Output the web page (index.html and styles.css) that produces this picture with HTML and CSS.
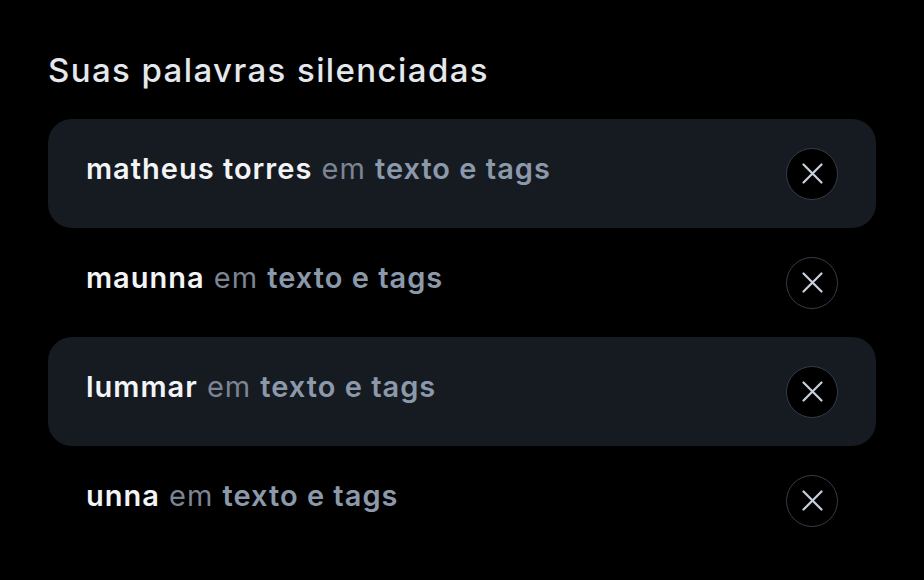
FILE: index.html
```html
<!DOCTYPE html>
<html lang="pt">
<head>
<meta charset="utf-8">
<link rel="stylesheet" href="styles.css">
</head>
<body>
<main class="page">
  <h1 class="title">Suas palavras silenciadas</h1>
  <ul class="list">
    <li class="row alt">
      <span class="label"><b class="word">matheus torres</b> <span class="em">em</span> <span class="where">texto e tags</span></span>
      <button class="remove" aria-label="Remover"><svg viewBox="0 0 24 24" width="27" height="27"><path d="M4 4L20 20M20 4L4 20" /></svg></button>
    </li>
    <li class="row">
      <span class="label"><b class="word">maunna</b> <span class="em">em</span> <span class="where">texto e tags</span></span>
      <button class="remove" aria-label="Remover"><svg viewBox="0 0 24 24" width="27" height="27"><path d="M4 4L20 20M20 4L4 20" /></svg></button>
    </li>
    <li class="row alt">
      <span class="label"><b class="word">lummar</b> <span class="em">em</span> <span class="where">texto e tags</span></span>
      <button class="remove" aria-label="Remover"><svg viewBox="0 0 24 24" width="27" height="27"><path d="M4 4L20 20M20 4L4 20" /></svg></button>
    </li>
    <li class="row">
      <span class="label"><b class="word">unna</b> <span class="em">em</span> <span class="where">texto e tags</span></span>
      <button class="remove" aria-label="Remover"><svg viewBox="0 0 24 24" width="27" height="27"><path d="M4 4L20 20M20 4L4 20" /></svg></button>
    </li>
  </ul>
</main>
</body>
</html>
```

FILE: styles.css
```css
html, body {
  margin: 0;
  padding: 0;
  background: #000;
}
body {
  font-family: Inter, "Noto Sans", sans-serif;
  width: 924px;
  height: 580px;
  overflow: hidden;
}
.page {
  padding: 48px 48px 0 48px;
}
.title {
  margin: 0;
  font-size: 33px;
  font-weight: 500;
  color: #e4e7eb;
  line-height: 44px;
  letter-spacing: 1.4px;
}
.list {
  list-style: none;
  margin: 27px 0 0 0;
  padding: 0;
}
.row {
  height: 109px;
  box-sizing: border-box;
  display: flex;
  align-items: center;
  justify-content: space-between;
  padding: 0 38px 0 38px;
  border-radius: 24px;
}
.row.alt {
  background: #161b22;
}
.label {
  font-size: 29px;
  line-height: 34px;
  margin-top: -10px;
  letter-spacing: 1px;
}
.word {
  font-weight: 600;
  color: #f2f4f6;
}
.em {
  font-weight: 400;
  color: #7c8593;
}
.where {
  font-weight: 600;
  color: #8c99aa;
}
.remove {
  width: 52px;
  height: 52px;
  border-radius: 50%;
  background: #000;
  border: 1px solid #343c48;
  display: flex;
  align-items: center;
  justify-content: center;
  padding: 0;
  cursor: pointer;
}
.remove svg path {
  stroke: #c7cfdb;
  stroke-width: 2;
  stroke-linecap: round;
  fill: none;
}
```
